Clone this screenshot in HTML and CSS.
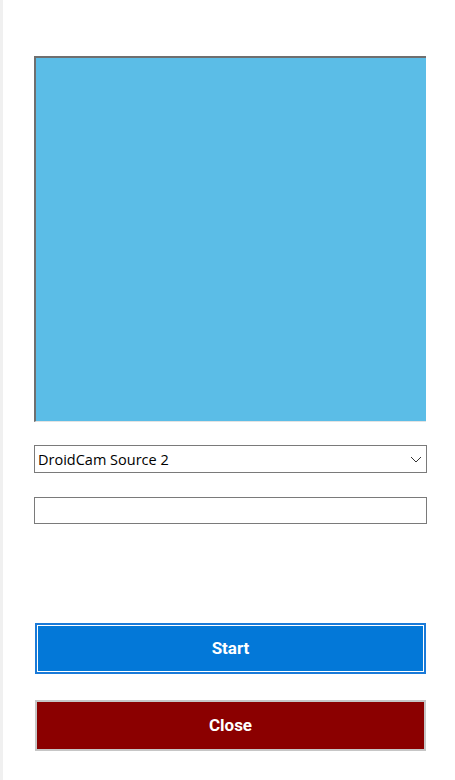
FILE: index.html
```html
<!DOCTYPE html>
<html>
<head>
<meta charset="utf-8">
<link rel="stylesheet" href="styles.css">
</head>
<body>
<div class="window">
  <div class="content">
    <div class="preview"></div>
    <div class="select">
      <span class="select-text">DroidCam Source 2</span>
      <svg class="chevron" width="12" height="7" viewBox="0 0 12 7"><path d="M1 1 L6 6 L11 1" fill="none" stroke="#333" stroke-width="1"/></svg>
    </div>
    <div class="textbox"></div>
    <button class="btn btn-start">Start</button>
    <button class="btn btn-close">Close</button>
  </div>
</div>
</body>
</html>
```
FILE: styles.css
```css
html, body {
  margin: 0;
  padding: 0;
  background: #ffffff;
}
.window {
  width: 455px;
  height: 780px;
  border-left: 3px solid #f0f0f0;
  box-sizing: border-box;
  background: #ffffff;
}
.content {
  display: flex;
  flex-direction: column;
  padding: 56px 0 0 31px;
  width: 393px;
}
.preview {
  box-sizing: border-box;
  width: 392px;
  height: 366px;
  background: #5bbde7;
  border-top: 2px solid #6f6f6f;
  border-left: 2px solid #6f6f6f;
  border-bottom: 1px solid #e3e3e3;
}
.select {
  box-sizing: border-box;
  margin-top: 23px;
  width: 393px;
  height: 28px;
  border: 1px solid #7a7a7a;
  display: flex;
  align-items: center;
  justify-content: space-between;
  padding: 0 4px 0 3px;
  font-family: "Open Sans", "Noto Sans", sans-serif;
  font-size: 14.5px;
  color: #000;
}
.textbox {
  box-sizing: border-box;
  margin-top: 24px;
  width: 393px;
  height: 27px;
  border: 1px solid #7a7a7a;
}
.btn {
  box-sizing: border-box;
  width: 391px;
  height: 51px;
  margin-left: 1px;
  font-family: Roboto, "Liberation Sans", sans-serif;
  font-weight: bold;
  font-size: 17px;
  color: #ffffff;
  padding: 0 0 2px 0;
  cursor: pointer;
}
.btn-start {
  margin-top: 99px;
  background: #0378d8;
  border: 2px solid #1a7ad8;
  box-shadow: inset 0 0 0 1px #ffffff;
}
.btn-close {
  margin-top: 26px;
  background: #8b0000;
  border: 2px solid #c6c6c6;
}
```
